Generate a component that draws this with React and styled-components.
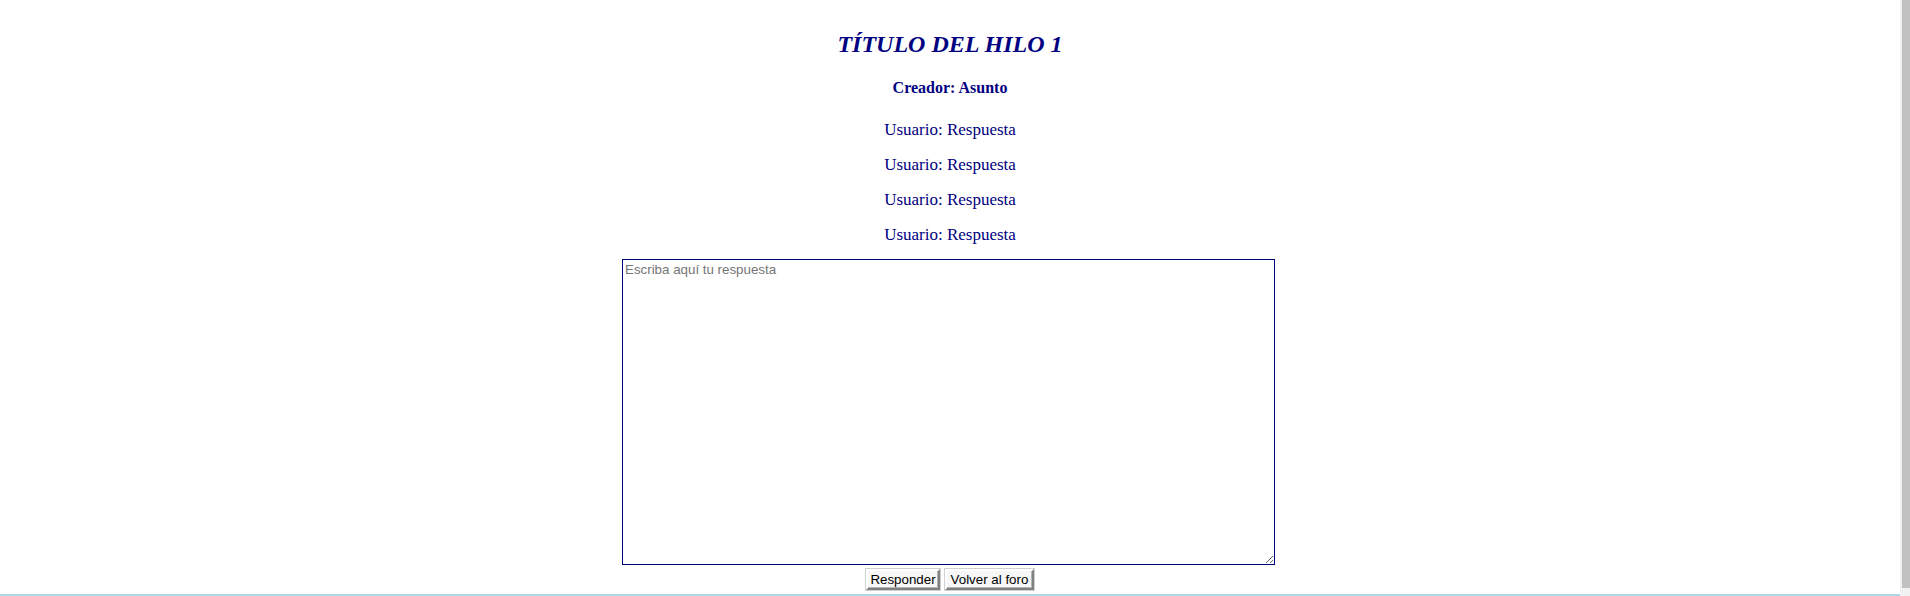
import React from "react";
import styled, { createGlobalStyle } from "styled-components";

const GlobalStyle = createGlobalStyle`
  html, body {
    margin: 0;
    padding: 0;
    background: #fff;
    overflow: hidden;
    font-family: "Liberation Serif", "Times New Roman", serif;
  }
`;

const Screen = styled.div`
  display: flex;
  height: 100vh;
  overflow: hidden;
`;

const Page = styled.div`
  flex: 1;
  display: flex;
  flex-direction: column;
  align-items: center;
  padding-top: 30px;
`;

// barra de desplazamiento de la ventana
const Track = styled.div`
  width: 10px;
  flex-shrink: 0;
  background: #f1f1f1;
`;

const Thumb = styled.div`
  height: 588px;
  margin-left: 2px;
  background: #c1c1c1;
`;

const Titulo = styled.h2`
  margin: 0;
  font-size: 24px;
  line-height: 28px;
  font-style: italic;
  font-weight: bold;
  color: #000080;
`;

const Creador = styled.h4`
  margin: 20.6px 0 0;
  font-size: 16px;
  line-height: 18px;
  font-weight: bold;
  color: #000080;
`;

const Respuestas = styled.div`
  display: flex;
  flex-direction: column;
  align-items: center;
  gap: 14.9px;
  margin-top: 23.6px;
`;

const Respuesta = styled.p`
  margin: 0;
  font-size: 17px;
  line-height: 20px;
  color: #000080;
`;

const Form = styled.form`
  display: flex;
  flex-direction: column;
  align-items: center;
  margin-top: 14.6px;
`;

const Caja = styled.textarea`
  box-sizing: border-box;
  width: 653px;
  height: 306px;
  margin: 0 0 0 -3px;
  padding: 2px;
  border: 1px solid #000080;
  font-family: "Liberation Sans", Arial, sans-serif;
  font-size: 13.33px;
  outline: none;

  &::placeholder {
    color: #757575;
  }
`;

const Botones = styled.div`
  display: flex;
  gap: 5px;
  margin-top: 4px;
`;

const Boton = styled.button`
  box-sizing: border-box;
  height: 21px;
  width: ${(props) => props.width};
  padding: 0;
  background: #f7f7f7;
  border: 2px solid;
  border-color: #ffffff #808080 #808080 #ffffff;
  box-shadow: inset -1px -1px 0 #b4b4b4, 0 0 0 1px #d0d0d0;
  font-family: "Liberation Sans", Arial, sans-serif;
  font-size: 13.33px;
  color: #000;
  cursor: pointer;
`;

const Pie = styled.footer`
  align-self: stretch;
  flex-shrink: 0;
  height: 8px;
  margin-top: 4px;
  border-top: 2px solid #add8e6;
`;

const respuestas = [
  "Usuario: Respuesta",
  "Usuario: Respuesta",
  "Usuario: Respuesta",
  "Usuario: Respuesta",
];

const App = () => {
  return (
    <>
      <GlobalStyle />
      <Screen>
        <Page>
          <Titulo>TÍTULO DEL HILO 1</Titulo>
          <Creador>Creador: Asunto</Creador>
          <Respuestas>
            {respuestas.map((item, i) => (
              <Respuesta key={i}>{item}</Respuesta>
            ))}
          </Respuestas>
          <Form onSubmit={(e) => e.preventDefault()}>
            <Caja placeholder="Escriba aquí tu respuesta" />
            <Botones>
              <Boton type="submit" width="74px">Responder</Boton>
              <Boton type="button" width="89px">Volver al foro</Boton>
            </Botones>
          </Form>
          <Pie />
        </Page>
        <Track>
          <Thumb />
        </Track>
      </Screen>
    </>
  );
};

export default App;
